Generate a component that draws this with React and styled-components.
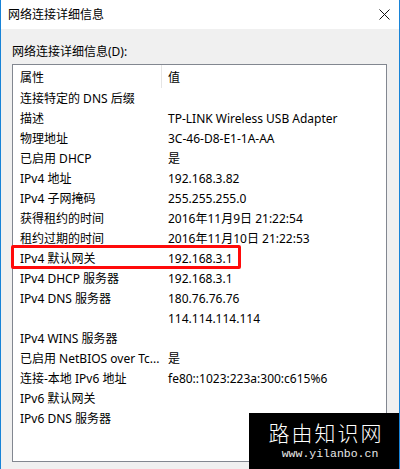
import React from "react";
import styled, { createGlobalStyle } from "styled-components";

const Global = createGlobalStyle`
  html, body { margin: 0; padding: 0; background: #fff; }
  body { font-family: "Segoe UI", "Noto Sans", "Noto Sans CJK SC", sans-serif; }
`;

const Window = styled.div`
  position: relative;
  width: 400px;
  height: 469px;
  box-sizing: border-box;
  border-left: 1px solid #1883d7;
  border-right: 1px solid #1883d7;
  display: flex;
  flex-direction: column;
  overflow: hidden;
  font-size: 12px;
  color: #000;
`;

const TitleBar = styled.div`
  height: 29px;
  flex: none;
  background: #fff;
  display: flex;
  align-items: center;
  justify-content: space-between;
  padding: 0 9px 0 7px;
  box-sizing: border-box;
`;

const Title = styled.span`
  font-size: 12px;
  line-height: 16px;
`;

const Body = styled.div`
  flex: 1;
  background: #f0f0f0;
  padding: 15px 12px 0 11px;
  display: flex;
  flex-direction: column;
`;

const Label = styled.div`
  line-height: 16px;
  margin-bottom: 4px;
`;

const ListBox = styled.div`
  height: 398px;
  box-sizing: border-box;
  border: 1px solid #828790;
  background: #fff;
  display: flex;
  flex-direction: column;
`;

const Header = styled.div`
  height: 23px;
  display: grid;
  grid-template-columns: 148px 1fr;
  align-items: center;
`;

const HeadCell = styled.div`
  padding-left: ${(p) => (p.$value ? "6px" : "7px")};
  padding-top: 1px;
  border-left: ${(p) => (p.$value ? "1px solid #e5e5e5" : "none")};
  height: 100%;
  box-sizing: border-box;
  display: flex;
  align-items: center;
`;

const Row = styled.div`
  position: relative;
  height: 20px;
  display: grid;
  grid-template-columns: 148px 1fr;
  align-items: center;
  padding-top: 1px;
  box-sizing: border-box;
`;

const Cell = styled.div`
  padding-left: 7px;
  white-space: nowrap;
  overflow: hidden;
  line-height: 16px;
`;

const Highlight = styled.div`
  position: absolute;
  left: -2px;
  top: -3px;
  width: 230px;
  height: 24px;
  border: 3px solid #ff0a0a;
  border-radius: 2px;
  box-sizing: border-box;
  pointer-events: none;
`;

const Watermark = styled.div`
  position: absolute;
  right: 0;
  bottom: 0;
  width: 150px;
  height: 56px;
  background: #000;
  color: #fff;
  display: flex;
  flex-direction: column;
  align-items: center;
  justify-content: center;
`;

const MarkTitle = styled.div`
  font-family: "Noto Sans CJK SC", sans-serif;
  font-size: 21px;
  font-weight: 300;
  line-height: 24px;
  letter-spacing: 2px;
  margin-left: 4px;
  margin-top: -2px;
`;

const MarkUrl = styled.div`
  font-family: "Liberation Mono", monospace;
  font-size: 11.5px;
  line-height: 14px;
  margin-top: 3px;
  margin-left: 12px;
  color: #e8e8e8;
`;

const rows = [
  ["连接特定的 DNS 后缀", ""],
  ["描述", "TP-LINK Wireless USB Adapter"],
  ["物理地址", "3C-46-D8-E1-1A-AA"],
  ["已启用 DHCP", "是"],
  ["IPv4 地址", "192.168.3.82"],
  ["IPv4 子网掩码", "255.255.255.0"],
  ["获得租约的时间", "2016年11月9日 21:22:54"],
  ["租约过期的时间", "2016年11月10日 21:22:53"],
  ["IPv4 默认网关", "192.168.3.1", true],
  ["IPv4 DHCP 服务器", "192.168.3.1"],
  ["IPv4 DNS 服务器", "180.76.76.76"],
  ["", "114.114.114.114"],
  ["IPv4 WINS 服务器", ""],
  ["已启用 NetBIOS over Tc...", "是"],
  ["连接-本地 IPv6 地址", "fe80::1023:223a:300:c615%6"],
  ["IPv6 默认网关", ""],
  ["IPv6 DNS 服务器", ""],
];

export default function App() {
  return (
    <>
      <Global />
      <Window>
        <TitleBar>
          <Title>网络连接详细信息</Title>
          <svg width="11" height="11" viewBox="0 0 11 11">
            <path d="M0.5 0.5 L10.5 10.5 M10.5 0.5 L0.5 10.5" stroke="#111" strokeWidth="1" />
          </svg>
        </TitleBar>
        <Body>
          <Label>网络连接详细信息(D):</Label>
          <ListBox>
            <Header>
              <HeadCell>属性</HeadCell>
              <HeadCell $value>值</HeadCell>
            </Header>
            {rows.map(([k, v, hl], i) => (
              <Row key={i}>
                <Cell>{k}</Cell>
                <Cell>{v}</Cell>
                {hl && <Highlight />}
              </Row>
            ))}
          </ListBox>
        </Body>
        <Watermark>
          <MarkTitle>路由知识网</MarkTitle>
          <MarkUrl>www.yilanbo.cn</MarkUrl>
        </Watermark>
      </Window>
    </>
  );
}
